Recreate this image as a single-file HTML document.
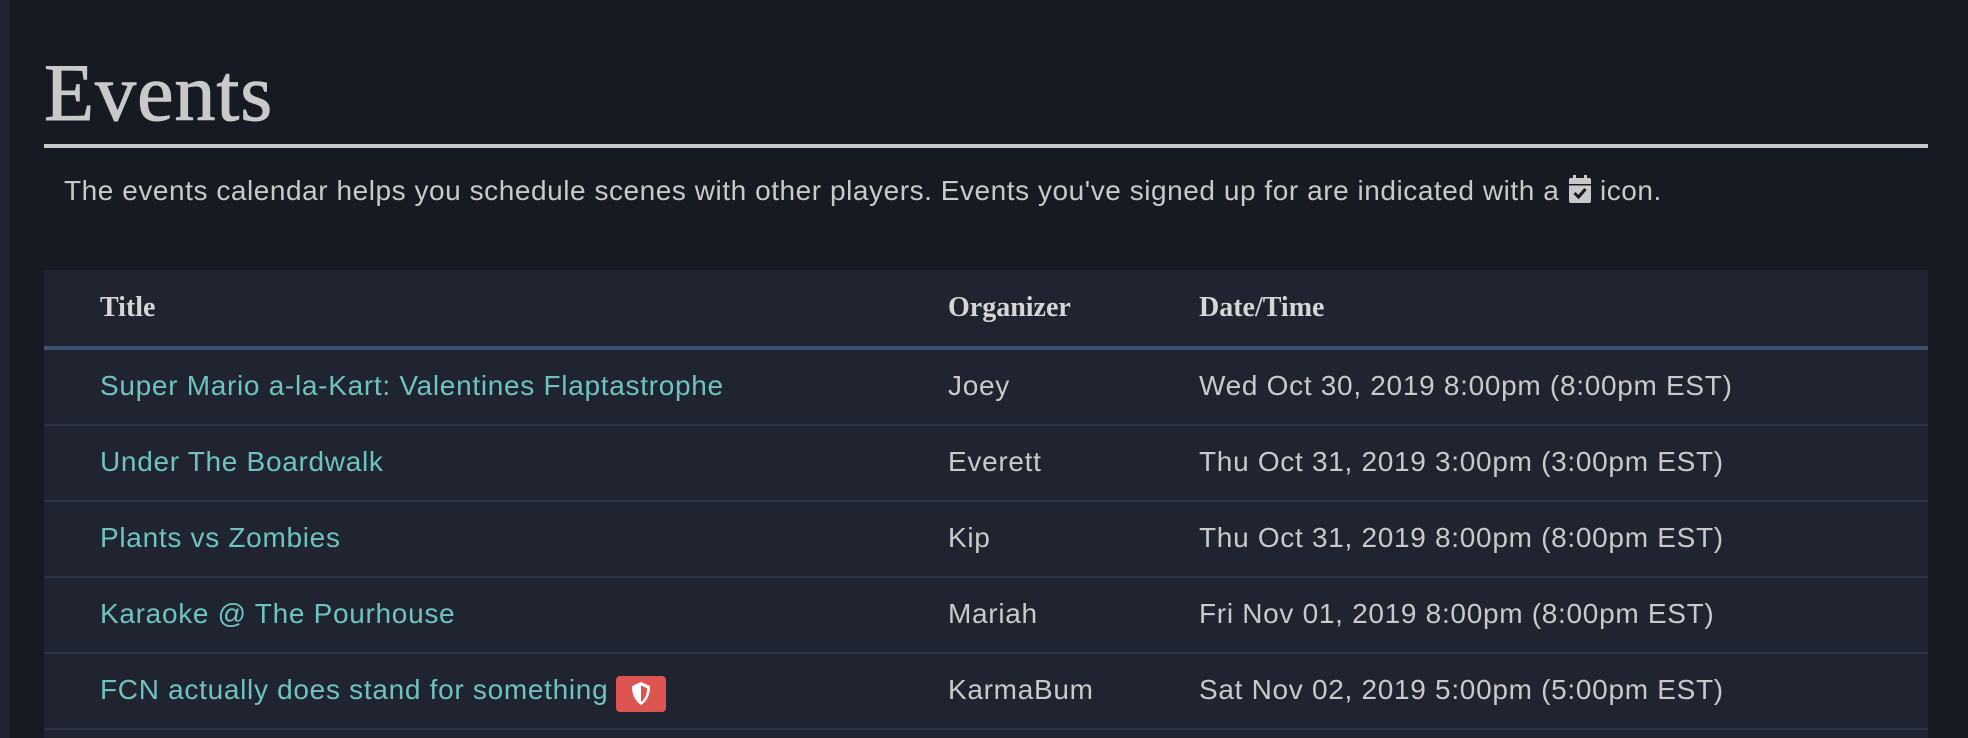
<!DOCTYPE html>
<html><head><meta charset="utf-8"><style>
html,body{margin:0;padding:0;}
body{width:1968px;height:738px;background:#161a22;position:relative;overflow:hidden;font-family:"Liberation Sans",sans-serif;color:#c9c9c9;}
.strip{position:absolute;left:0;top:0;width:10px;height:738px;background:#1f2430;}
h1{position:absolute;left:44px;top:48px;margin:0;font-family:"Liberation Serif",serif;font-weight:normal;font-size:82px;line-height:90px;color:#c9c9c9;letter-spacing:1px;-webkit-text-stroke:1px #c9c9c9;}
.rule{position:absolute;left:44px;top:144px;width:1884px;height:4px;background:#c9c9c9;}
.desc{position:absolute;left:64px;top:174px;font-size:28px;letter-spacing:0.55px;line-height:34px;white-space:nowrap;}
.cal{display:inline-block;vertical-align:-3px;}
.table{position:absolute;left:44px;top:270px;width:1884px;height:468px;background:#1f2430;}
.hdr{position:absolute;left:0;top:0;width:100%;height:76px;border-bottom:4px solid #3e5170;}
.th{position:absolute;top:22px;font-family:"Liberation Serif",serif;font-weight:bold;font-size:28px;color:#d6d6d6;}
.row{position:absolute;left:0;width:100%;height:74px;border-bottom:2px solid #2d3444;}
.c{position:absolute;top:18px;font-size:28px;letter-spacing:0.7px;line-height:36px;white-space:nowrap;}
.t{left:56px;color:#6fc3bf;}
.o{left:904px;}
.d{left:1155px;}
.badge{display:inline-block;width:50px;height:36px;background:#dd5450;border-radius:4px;vertical-align:-8px;margin-left:8px;text-align:center;}
</style></head><body>
<div class="strip"></div>
<h1>Events</h1>
<div class="rule"></div>
<div class="desc">The events calendar helps you schedule scenes with other players. Events you've signed up for are indicated with a <svg class="cal" width="24" height="28" viewBox="0 0 24 28"><rect x="5" y="0" width="3" height="6" fill="#c9c9c9"/><rect x="16" y="0" width="3" height="6" fill="#c9c9c9"/><rect x="1" y="3" width="22" height="25" rx="2" fill="#c9c9c9"/><rect x="1" y="9" width="22" height="1.5" fill="#161a22"/><path d="M6.5 18 L10.5 22 L17.5 14" stroke="#161a22" stroke-width="3" fill="none"/></svg> icon.</div>
<div class="table">
<div class="hdr"><span class="th" style="left:56px">Title</span><span class="th" style="left:904px">Organizer</span><span class="th" style="left:1155px">Date/Time</span></div>
<div class="row" style="top:80px"><span class="c t">Super Mario a-la-Kart: Valentines Flaptastrophe</span><span class="c o">Joey</span><span class="c d">Wed Oct 30, 2019 8:00pm (8:00pm EST)</span></div>
<div class="row" style="top:156px"><span class="c t">Under The Boardwalk</span><span class="c o">Everett</span><span class="c d">Thu Oct 31, 2019 3:00pm (3:00pm EST)</span></div>
<div class="row" style="top:232px"><span class="c t">Plants vs Zombies</span><span class="c o">Kip</span><span class="c d">Thu Oct 31, 2019 8:00pm (8:00pm EST)</span></div>
<div class="row" style="top:308px"><span class="c t">Karaoke @ The Pourhouse</span><span class="c o">Mariah</span><span class="c d">Fri Nov 01, 2019 8:00pm (8:00pm EST)</span></div>
<div class="row" style="top:384px"><span class="c t">FCN actually does stand for something<span class="badge"><svg width="22" height="26" viewBox="0 0 22 26" style="margin-top:5px"><path d="M11 1 L20 5 C20 14 17 20 11 24 C5 20 2 14 2 5 Z" fill="#fff"/><path d="M11 4.5 L17 7.2 C17 13.5 15 18 11 21 Z" fill="#dd5450"/></svg></span></span><span class="c o">KarmaBum</span><span class="c d">Sat Nov 02, 2019 5:00pm (5:00pm EST)</span></div>
</div>
</body></html>
